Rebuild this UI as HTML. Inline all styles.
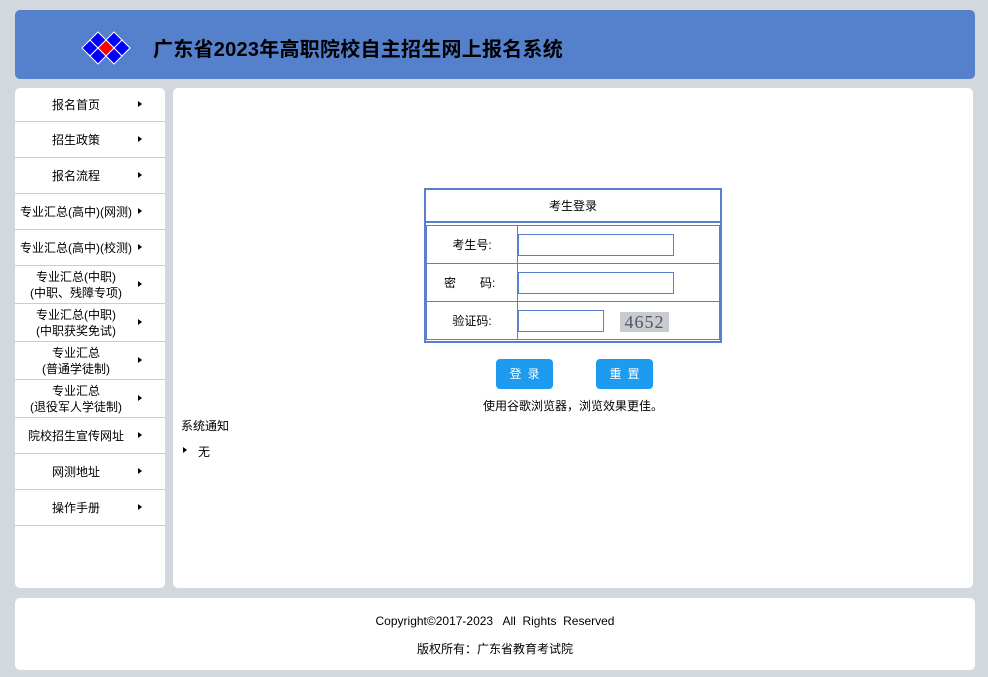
<!DOCTYPE html><html><head><meta charset="utf-8"><style>
*{margin:0;padding:0;box-sizing:border-box}
body{width:988px;height:677px;background:#d3d7de;font-family:"Liberation Sans","Noto Sans CJK SC",sans-serif;font-size:12px;color:#000;position:relative;overflow:hidden}
.hd{position:absolute;left:15px;top:10px;width:960px;height:69px;background:#5580cc;border-radius:5px}
.hd h1{position:absolute;left:138px;top:26px;font-size:20px;font-weight:bold;line-height:28px;letter-spacing:0.25px}
.side{position:absolute;left:15px;top:88px;width:150px;height:500px;background:#fff;border-radius:5px}
.it{position:absolute;left:0;width:150px;border-bottom:1px solid #ccc;display:flex;align-items:center}
.it span{width:122px;text-align:center;line-height:16px;font-size:12px}
.it i{position:absolute;left:123px;top:50%;margin-top:-4px;width:0;height:0;border-left:4px solid #000;border-top:3.5px solid transparent;border-bottom:3.5px solid transparent}
.main{position:absolute;left:173px;top:88px;width:800px;height:500px;background:#fff;border-radius:5px}
.ft{position:absolute;left:15px;top:598px;width:960px;height:72px;background:#fff;border-radius:5px;text-align:center;font-size:12px}
.box{position:absolute;left:251px;top:100px;width:298px;height:155px;border:2px solid #5a80cd}
.inp{position:absolute;border:1px solid #5a80cd;height:22px;background:#fff}
.btn{position:absolute;top:271px;width:57px;height:30px;background:#1d9bf0;border-radius:4px;color:#fff;text-align:center;line-height:30px;font-size:12px;letter-spacing:6px;text-indent:6px}
</style></head><body>
<div class="hd">
<svg style="position:absolute;left:66px;top:20px" width="50" height="36" viewBox="81 29 50 36">
<g stroke="#fff" stroke-width="1">
<polygon points="82,47 90,39 98,47 90,55" fill="#0000ff"/>
<polygon points="90,39 98,31 106,39 98,47" fill="#0000ff"/>
<polygon points="90,55 98,47 106,55 98,63" fill="#0000ff"/>
<polygon points="106,39 114,31 122,39 114,47" fill="#0000ff"/>
<polygon points="106,55 114,47 122,55 114,63" fill="#0000ff"/>
<polygon points="114,47 122,39 130,47 122,55" fill="#0000ff"/>
<polygon points="98,47 106,39 114,47 106,55" fill="#ff0000"/>
</g></svg>
<h1>广东省2023年高职院校自主招生网上报名系统</h1>
</div>
<div class="side">
<div class="it" style="top:0;height:34px"><span>报名首页</span><i></i></div>
<div class="it" style="top:34px;height:36px"><span>招生政策</span><i></i></div>
<div class="it" style="top:70px;height:36px"><span>报名流程</span><i></i></div>
<div class="it" style="top:106px;height:36px"><span>专业汇总(高中)(网测)</span><i></i></div>
<div class="it" style="top:142px;height:36px"><span>专业汇总(高中)(校测)</span><i></i></div>
<div class="it" style="top:178px;height:38px"><span>专业汇总(中职)<br>(中职、残障专项)</span><i></i></div>
<div class="it" style="top:216px;height:38px"><span>专业汇总(中职)<br>(中职获奖免试)</span><i></i></div>
<div class="it" style="top:254px;height:38px"><span>专业汇总<br>(普通学徒制)</span><i></i></div>
<div class="it" style="top:292px;height:38px"><span>专业汇总<br>(退役军人学徒制)</span><i></i></div>
<div class="it" style="top:330px;height:36px"><span>院校招生宣传网址</span><i></i></div>
<div class="it" style="top:366px;height:36px"><span>网测地址</span><i></i></div>
<div class="it" style="top:402px;height:36px"><span>操作手册</span><i></i></div>
</div>
<div class="main">
<div class="box">
<div style="height:33px;border-bottom:2px solid #5a80cd;text-align:center;line-height:33px">考生登录</div>
<div style="position:absolute;left:0;top:35px;width:294px;height:115px;border:1px solid #5a80cd">
<div style="position:absolute;left:90px;top:0;width:1px;height:113px;background:#5a80cd"></div>
<div style="position:absolute;left:0;top:37px;width:292px;height:1px;background:#5a80cd"></div>
<div style="position:absolute;left:0;top:75px;width:292px;height:1px;background:#5a80cd"></div>
<div style="position:absolute;left:0;top:10px;width:90px;text-align:center">考生号:</div>
<div style="position:absolute;left:17px;top:48px">密　　码:</div>
<div style="position:absolute;left:0;top:86px;width:90px;text-align:center">验证码:</div>
<div class="inp" style="left:91px;top:8px;width:156px"></div>
<div class="inp" style="left:91px;top:46px;width:156px"></div>
<div class="inp" style="left:91px;top:84px;width:86px"></div>
<div style="position:absolute;left:193px;top:86px;width:49px;height:20px;background:#c8ccd0;font-family:'Liberation Serif',serif;font-size:18px;color:#556;line-height:20px;text-align:center;letter-spacing:1px">4652</div>
</div></div>
<div class="btn" style="left:323px">登录</div>
<div class="btn" style="left:423px">重置</div>
<div style="position:absolute;left:0;top:309px;width:800px;text-align:center">使用谷歌浏览器，浏览效果更佳。</div>
<div style="position:absolute;left:8px;top:329px">系统通知</div>
<div style="position:absolute;left:10px;top:359px;width:0;height:0;border-left:4px solid #000;border-top:3.5px solid transparent;border-bottom:3.5px solid transparent"></div>
<div style="position:absolute;left:25px;top:355px">无</div>
</div>
<div class="ft"><div style="position:absolute;top:16px;width:100%">Copyright©2017-2023 &nbsp; All&nbsp; Rights&nbsp; Reserved</div><div style="position:absolute;top:42px;width:100%">版权所有：广东省教育考试院</div></div>
</body></html>
